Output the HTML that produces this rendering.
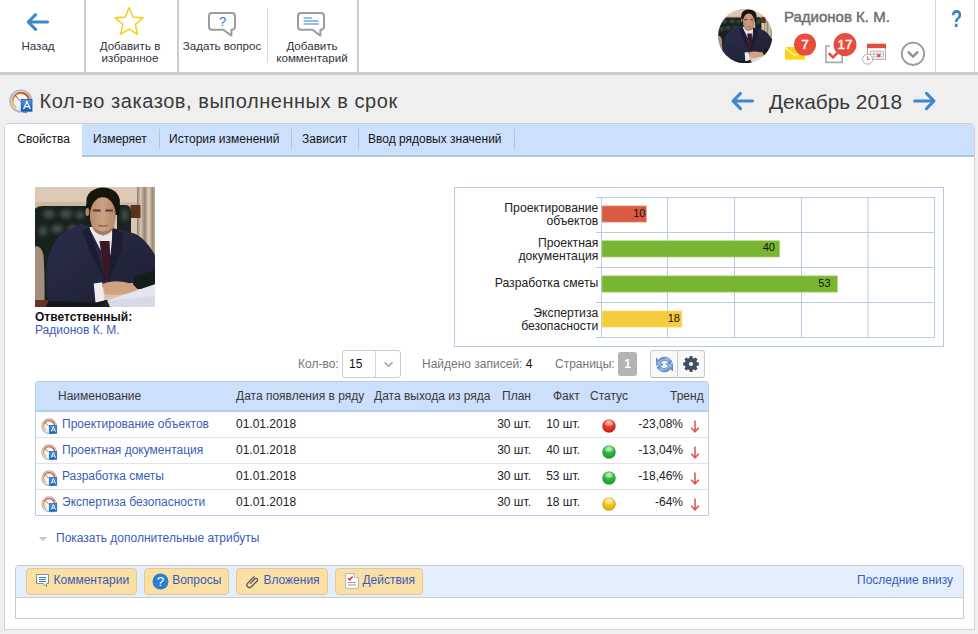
<!DOCTYPE html>
<html lang="ru">
<head>
<meta charset="utf-8">
<title>Кол-во заказов, выполненных в срок</title>
<style>
*{box-sizing:border-box;margin:0;padding:0}
html,body{width:978px;height:634px;overflow:hidden}
body{background:#efefef;font-family:"Liberation Sans",Arial,sans-serif;font-size:12px;color:#222;position:relative}
.abs{position:absolute}
a{color:#3a5db8;text-decoration:none}
/* top bar */
#top{position:absolute;left:0;top:0;width:978px;height:75px;background:#fff;border-bottom:3px solid #c9cdd3}
.vsep{position:absolute;top:0;width:2px;height:72px;background:#c9cdd3}
.tbtn{position:absolute;top:40px;text-align:center;font-size:11.6px;line-height:12px;color:#33333f;white-space:nowrap}
/* title */
#title{position:absolute;left:39.5px;top:87.5px;font-size:20px;letter-spacing:.55px;line-height:26px;color:#3a3a3a;white-space:nowrap}
#period{position:absolute;left:769px;top:89px;font-size:20.8px;line-height:26px;color:#3a3a3a;white-space:nowrap}
/* panel */
#panel{position:absolute;left:4px;top:123px;width:971px;height:507px;background:#fff;border:1px solid #d2d4d8;border-top-color:#c6ccd6;border-radius:5px 5px 0 0}
#tabs{position:absolute;left:0;top:0;width:969px;height:33px;background:#cce0fc;border-bottom:2px solid #b0c6e0;border-radius:4px 4px 0 0}
.tab{position:absolute;top:0;height:31px;line-height:31px;font-size:12px;color:#151515;white-space:nowrap}
.tsep{position:absolute;top:5px;width:1px;height:20px;background:#b4c4d8}
/* table */
#grid{position:absolute;left:35px;top:381px;width:674px;height:135px;border:1px solid #b9cde8;border-radius:3px 3px 0 0;background:#fff}
#ghead{position:absolute;left:0;top:0;width:672px;height:29.5px;background:#cce0fc;border-bottom:2px solid #b5cbe8}
.th{position:absolute;top:0;line-height:29px;color:#3a3a3a;white-space:nowrap}
.row{position:absolute;left:0;width:672px;height:26px;border-top:1px solid #e1e4e9}
.row span,.row a{position:absolute;top:0;line-height:24px;white-space:nowrap}
.r{text-align:right}
/* comments */
#cbox{position:absolute;left:15px;top:565px;width:949px;height:54px;border:1px solid #c8c8c8;background:#fff;border-radius:4px 4px 0 0}
#chead{position:absolute;left:0;top:0;width:947px;height:32px;background:#e4effe;border-bottom:1px solid #cbcdd0;border-radius:3px 3px 0 0}
.obtn{position:absolute;top:2px;height:27px;background:#fbe0a6;border:1px solid #ecc591;border-radius:4px;color:#3759bb;line-height:23.4px;white-space:nowrap}
</style>
</head>
<body>
<svg width="0" height="0" style="position:absolute">
<defs>
<linearGradient id="garc" x1="0" y1="1" x2="1" y2="0"><stop offset="0" stop-color="#f8d27a"/><stop offset=".35" stop-color="#f28a1c"/><stop offset=".7" stop-color="#ee5a14"/><stop offset="1" stop-color="#e8401c"/></linearGradient>
<radialGradient id="gface" cx=".5" cy=".4" r=".6"><stop offset="0" stop-color="#ffffff"/><stop offset="1" stop-color="#dfe6f0"/></radialGradient>
<linearGradient id="gblue" x1="0" y1="0" x2="0" y2="1"><stop offset="0" stop-color="#4a98e0"/><stop offset="1" stop-color="#1a5cb4"/></linearGradient>
<symbol id="kpi" viewBox="0 0 24 24">
<circle cx="11.8" cy="12" r="10.7" fill="url(#gface)" stroke="#aab5c8" stroke-width="1.6"/>
<path d="M6.9 18.6 A8.2 8.2 0 1 1 19.9 10.6" fill="none" stroke="url(#garc)" stroke-width="2.1"/>
<path d="M11.6 12.4 L6.2 6.4" stroke="#555" stroke-width="1" fill="none"/>
<rect x="12.2" y="10.6" width="10.8" height="11.6" fill="url(#gblue)" stroke="#1c58a8" stroke-width=".8"/>
<rect x="14.2" y="22.2" width="4" height="1.6" fill="#2c7cd8"/>
<path d="M14.6 20 L17.9 12.6 L21.2 20 M15.8 17.6 H20" fill="none" stroke="#fff" stroke-width="1.3"/>
</symbol>
<radialGradient id="bred" cx=".5" cy=".25" r=".8"><stop offset="0" stop-color="#ffb0a0"/><stop offset=".35" stop-color="#f04030"/><stop offset="1" stop-color="#c81808"/></radialGradient>
<radialGradient id="bgreen" cx=".5" cy=".25" r=".8"><stop offset="0" stop-color="#a8eab0"/><stop offset=".35" stop-color="#34bc44"/><stop offset="1" stop-color="#149a24"/></radialGradient>
<radialGradient id="byel" cx=".5" cy=".25" r=".8"><stop offset="0" stop-color="#fff0a8"/><stop offset=".35" stop-color="#f8cc20"/><stop offset="1" stop-color="#d8a000"/></radialGradient>
<symbol id="dn" viewBox="0 0 10 14"><path d="M5 1.5 V12.6 M1.2 8.8 L5 12.8 L8.8 8.8" fill="none" stroke="#d9534a" stroke-width="1.5"/></symbol>
<filter id="bl" x="-5%" y="-5%" width="110%" height="110%"><feGaussianBlur stdDeviation="0.7"/></filter>
<filter id="bl2" x="-20%" y="-20%" width="140%" height="140%"><feGaussianBlur stdDeviation="2"/></filter>
<clipPath id="pc"><rect width="120" height="120"/></clipPath>
<clipPath id="av"><circle cx="60" cy="60" r="60"/></clipPath>
<linearGradient id="cur" x1="0" x2="1" y1="0" y2="0"><stop offset="0" stop-color="#8a7866"/><stop offset=".18" stop-color="#d6c8b4"/><stop offset=".38" stop-color="#98846e"/><stop offset=".58" stop-color="#dccfbc"/><stop offset=".78" stop-color="#a08c76"/><stop offset="1" stop-color="#d2c4b0"/></linearGradient>
<linearGradient id="suit" x1="0" x2="1" y1="0" y2="1"><stop offset="0" stop-color="#2c2e49"/><stop offset="1" stop-color="#1d1f33"/></linearGradient>
<linearGradient id="face" x1="0" x2="1" y1="0" y2="0"><stop offset="0" stop-color="#b88a6a"/><stop offset=".5" stop-color="#cda284"/><stop offset="1" stop-color="#b48868"/></linearGradient>
<g id="man">
<rect width="120" height="120" fill="#d9c6b0"/>
<g filter="url(#bl)">
<rect x="-2" y="-2" width="124" height="21" fill="#dccab6"/>
<rect x="-2" y="15" width="124" height="5" fill="#cdb8a2"/>
<rect x="102" y="-2" width="20" height="80" fill="url(#cur)"/>
<rect x="95.5" y="18" width="10" height="13" fill="#5c301c"/>
<path d="M-2 28 Q-2 19 8 19 H52 Q58 19 58 28 V118 H-2 Z" fill="#18211f"/>
<path d="M82 18 H91 Q96 18 96 26 V62 H82 Z" fill="#1a2422"/>
<g filter="url(#bl2)" fill="#56645e" opacity=".75"><ellipse cx="14" cy="27" rx="6" ry="4"/><ellipse cx="31" cy="27" rx="6" ry="4"/><ellipse cx="45" cy="28" rx="4" ry="4"/><ellipse cx="22" cy="42" rx="6" ry="4"/><ellipse cx="38" cy="42" rx="5" ry="4"/><ellipse cx="8" cy="44" rx="4" ry="5"/><ellipse cx="90" cy="28" rx="3" ry="6"/></g>
<path d="M-2 60 Q6 57 8.5 68 Q10 90 9.5 113 H-2 Z" fill="#a68e7c"/>
<path d="M98 86 L122 80 V102 H98 Z" fill="#141c1a"/>
<rect x="-2" y="113" width="80" height="9" fill="#17181a"/><path d="M-2 113 H14 L10 122 H-2 Z" fill="#6a3220"/>
<path d="M46 37 Q32 43 24.5 49 Q15 58 12 78 Q10.5 100 13 114 L60 115.5 L62 101 L98 96 L99 89 L122 83 V72 Q114 56 104 49 Q96 44 79 41.5 L54 40 Z" fill="url(#suit)"/>
<path d="M54 40.5 L66 37 L77 41 L77.6 58 L75 70 L72 96 L66 64 Z" fill="#ebe7ea"/>
<path d="M64.5 54 H74.6 L75.8 90 L72.4 97 L69 88 Z" fill="#3a1828"/>
<path d="M47 44 L54 40 L71 96 L56 66 Z" fill="#1b1d31"/>
<path d="M88 47 L78 41 L73 96 L86 64 Z" fill="#1b1d31"/>
<ellipse cx="68" cy="13.5" rx="16.6" ry="13" fill="#19130f"/>
<path d="M51.4 16 Q50 22 52 30 L56 30 V14 Z M84.4 12 Q86 20 84 28 L80 28 V12 Z" fill="#19130f"/>
<ellipse cx="67.8" cy="28.6" rx="12.9" ry="18.4" fill="url(#face)"/>
<ellipse cx="52.4" cy="25" rx="1.9" ry="4" fill="#b88868"/>
<path d="M56 17 Q58 9.5 68 9 Q78 9 80.5 16 Q81 8 68 6 Q55 7 56 17 Z" fill="#19130f"/>
<path d="M58 23.6 H65.6 M70.4 23.6 H78" stroke="#5a3c2e" stroke-width="2" fill="none"/>
<path d="M63.4 38.4 Q68 39.8 72.6 38.4" stroke="#8a5648" stroke-width="1.3" fill="none"/>
<path d="M56 36 Q58 47 68 48.4 Q78 47 80 36 Q77 44 68 44.6 Q59 44 56 36 Z" fill="#a07c62"/>
<path d="M58.7 96.5 L67.2 95.2 L69.5 113.6 L60.5 115.6 Z" fill="#eeeaee"/>
<path d="M67.2 97 Q80 91.5 98 97.5 L104 103.5 Q92 109 70 107.6 Z" fill="#d0a282"/>
<path d="M72 113.6 L122 96.5 V122 H76 Z" fill="#e4e5ee"/>
<path d="M72 114 L122 108.6 V122 H74 Z" fill="#d6d9e6"/>
<path d="M72 113.6 L76 122 H60 Z" fill="#1c2024"/>
</g>
</g></defs></svg>
<div id="top">
  <div class="vsep" style="left:84px"></div>
  <div class="vsep" style="left:177px"></div>
  <div class="vsep" style="left:357px"></div>
  <div class="abs" style="left:267px;top:8px;width:1px;height:55px;background:#d5d8de"></div>
  <div class="abs" style="left:935px;top:0;width:1px;height:72px;background:#d2d6de"></div>
  <div class="abs" style="left:974px;top:0;width:1px;height:72px;background:#d2d6de"></div>

  <svg class="abs" style="left:24px;top:9.5px" width="28" height="24" viewBox="0 0 28 24"><path d="M11.6 4.6 L4.2 12 L11.6 19.4 M4.6 12 H23.6" fill="none" stroke="#3d88c9" stroke-width="3" stroke-linecap="round" stroke-linejoin="round"/></svg>
  <div class="tbtn" style="left:0;width:76px">Назад</div>

  <svg class="abs" style="left:112.3px;top:3.7px" width="34.2" height="34.2" viewBox="0 0 32 32"><path d="M16 3.5 L19.6 12.2 L29 13 L21.9 19.2 L24 28.4 L16 23.5 L8 28.4 L10.1 19.2 L3 13 L12.4 12.2 Z" fill="none" stroke="#f7cf1d" stroke-width="1.45" stroke-linejoin="round"/></svg>
  <div class="tbtn" style="left:86px;width:88px">Добавить в<br>избранное</div>

  <svg class="abs" style="left:206.8px;top:9.6px" width="32" height="28" viewBox="0 0 32 28"><path d="M5 3 H25 a3 3 0 0 1 3 3 V16.7 a3 3 0 0 1 -3 3 H24.4 V25.6 L16.4 19.7 H5 a3 3 0 0 1 -3 -3 V6 a3 3 0 0 1 3 -3 Z" fill="#fff" stroke="#9c9c9c" stroke-width="2" stroke-linejoin="round"/><text x="15.6" y="16" font-family="Liberation Sans,sans-serif" font-size="13" fill="#2f74c0" text-anchor="middle">?</text></svg>
  <div class="tbtn" style="left:179px;width:86px">Задать вопрос</div>

  <svg class="abs" style="left:296.3px;top:9.6px" width="32" height="28" viewBox="0 0 32 28"><path d="M5 3 H25 a3 3 0 0 1 3 3 V16.7 a3 3 0 0 1 -3 3 H24.4 V25.6 L16.4 19.7 H5 a3 3 0 0 1 -3 -3 V6 a3 3 0 0 1 3 -3 Z" fill="#fff" stroke="#9c9c9c" stroke-width="2" stroke-linejoin="round"/><path d="M7.6 8 H16 M7.6 11 H22.6 M7.6 14 H22.6" stroke="#2f7fd4" stroke-width="1.2" fill="none"/></svg>
  <div class="tbtn" style="left:268px;width:88px">Добавить<br>комментарий</div>

  <div class="abs" style="left:784px;top:8px;font-size:15px;font-weight:normal;color:#6e6e6e;-webkit-text-stroke:.45px #6e6e6e;line-height:18px;white-space:nowrap">Радионов К. М.</div>
  <svg class="abs" style="left:780px;top:30px" width="150" height="42" viewBox="780 30 150 42" font-family="Liberation Sans,Arial,sans-serif">
    <path d="M785 47 H805 V59.6 H785 Z" fill="#fcd116"/><path d="M785 47.6 L795.2 55.8 L805 47.6" fill="none" stroke="#fff2a8" stroke-width="1.5"/>
    <circle cx="805" cy="44.6" r="11" fill="#e84c3d"/><text x="805" y="49.2" font-size="13.5" fill="#fff" stroke="#fff" stroke-width=".4" text-anchor="middle">7</text>
    <path d="M830 46 H826 V62.4 H842.2 V46 H838" fill="none" stroke="#a9a9a9" stroke-width="1.6"/><path d="M828.8 53.2 L833 57.4 L838 52.4" fill="none" stroke="#e84c3d" stroke-width="2.5"/>
    <circle cx="845" cy="44.6" r="11.5" fill="#e84c3d"/><text x="845" y="49.2" font-size="13.5" fill="#fff" stroke="#fff" stroke-width=".4" text-anchor="middle">17</text>
    <rect x="867.5" y="44.3" width="18" height="15" fill="#fff" stroke="#a9a9a9" stroke-width="1"/><rect x="867" y="43.8" width="19" height="4.4" fill="#e84c3d"/>
    <path d="M870.5 51 H883.5 M870.5 54 H883.5 M870.5 57 H883.5 M870.5 51 V57 M873.8 51 V57 M877 51 V57 M880.2 51 V57 M883.5 51 V57" stroke="#b0b0b0" stroke-width=".8" fill="none"/><rect x="877.2" y="54.2" width="3" height="2.8" fill="#e84c3d"/>
    <circle cx="867.6" cy="59.2" r="5" fill="#fff" stroke="#b0b0b0" stroke-width="1"/><path d="M867.6 56.4 V59.4 H869.8" fill="none" stroke="#e84c3d" stroke-width="1"/>
    <circle cx="913" cy="53.8" r="11.2" fill="#fff" stroke="#9a9a9a" stroke-width="1.8"/><path d="M908 51.6 L913 56.6 L918 51.6" fill="none" stroke="#8e8e8e" stroke-width="2.3"/>
  </svg>
  <div class="abs" style="left:950.5px;top:4.5px;font-size:24px;font-weight:bold;color:#3f7cc4;line-height:28px;transform:scaleX(.76);transform-origin:0 0">?</div>
</div>

<svg class="abs" style="left:9px;top:89px" width="24" height="24"><use href="#kpi"/></svg>
<svg class="abs" style="left:730px;top:90px" width="26" height="22" viewBox="0 0 26 22"><path d="M10.5 3.4 L3 11 L10.5 18.6 M3.4 11 H22.6" fill="none" stroke="#3d88c9" stroke-width="3" stroke-linecap="round" stroke-linejoin="round"/></svg>
<svg class="abs" style="left:911px;top:90px" width="26" height="22" viewBox="0 0 26 22"><path d="M15.5 3.4 L23 11 L15.5 18.6 M22.6 11 H3.6" fill="none" stroke="#3d88c9" stroke-width="3" stroke-linecap="round" stroke-linejoin="round"/></svg>

<div id="title">Кол-во заказов, выполненных в срок</div>
<div id="period">Декабрь 2018</div>

<div id="panel">
  <div id="tabs">
    <div class="abs" style="left:0;top:0;width:77px;height:33px;background:#fff;border-radius:4px 0 0 0"></div>
    <div class="tab" style="left:12.3px">Свойства</div>
    <div class="tab" style="left:88px">Измеряет</div>
    <div class="tsep" style="left:154px"></div>
    <div class="tab" style="left:164px">История изменений</div>
    <div class="tsep" style="left:286px"></div>
    <div class="tab" style="left:297px">Зависит</div>
    <div class="tsep" style="left:353px"></div>
    <div class="tab" style="left:363px">Ввод рядовых значений</div>
    <div class="tsep" style="left:509px"></div>
  </div>
</div>

<svg class="abs" style="left:35px;top:187px" width="120" height="120" viewBox="0 0 120 120"><g clip-path="url(#pc)"><use href="#man"/></g></svg>
<svg class="abs" style="left:717.8px;top:8.6px" width="54.4" height="54.2" viewBox="0 0 120 120"><g clip-path="url(#av)"><use href="#man"/></g></svg>
<svg class="abs" style="left:454px;top:187px" width="490" height="160" viewBox="454 187 490 160" font-family="Liberation Sans,Arial,sans-serif">
<rect x="454.5" y="187.5" width="489" height="159" fill="#fff" stroke="#b7c8e6"/>
<path d="M601.5 197 V338 M667.5 197 V338 M734.5 197 V338 M801.5 197 V338 M868 197 V338 M934.5 197 V338 M596 197.5 H935 M596 232.5 H935 M596 267.5 H935 M596 302.5 H935 M596 337.5 H935 " stroke="#bbcbe5" stroke-width="1" fill="none"/>
<rect x="602" y="205.9" width="44.4" height="16.2" fill="#d95b43" stroke="#e9a090" stroke-width=".7"/>
<text x="639.3" y="216.5" font-size="11" text-anchor="middle" fill="#111">10</text>
<rect x="602" y="240.8" width="177.6" height="16.2" fill="#7ab531" stroke="#a8d070" stroke-width=".7"/>
<text x="768.8" y="251.4" font-size="11" text-anchor="middle" fill="#111">40</text>
<rect x="602" y="275.9" width="235.3" height="16.2" fill="#7ab531" stroke="#a8d070" stroke-width=".7"/>
<text x="824.4" y="286.5" font-size="11" text-anchor="middle" fill="#111">53</text>
<rect x="602" y="310.9" width="79.9" height="16.2" fill="#f6cc3c" stroke="#f9e08c" stroke-width=".7"/>
<text x="673.8" y="321.5" font-size="11" text-anchor="middle" fill="#111">18</text>
<text x="598.3" y="211.5" font-size="12.2" text-anchor="end" fill="#222">Проектирование</text>
<text x="598.3" y="224.9" font-size="12.2" text-anchor="end" fill="#222">объектов</text>
<text x="598.3" y="246.5" font-size="12.2" text-anchor="end" fill="#222">Проектная</text>
<text x="598.3" y="259.9" font-size="12.2" text-anchor="end" fill="#222">документация</text>
<text x="598.3" y="287.3" font-size="12.2" text-anchor="end" fill="#222">Разработка сметы</text>
<text x="598.3" y="316.5" font-size="12.2" text-anchor="end" fill="#222">Экспертиза</text>
<text x="598.3" y="329.9" font-size="12.2" text-anchor="end" fill="#222">безопасности</text>
</svg>
<div class="abs" style="left:35px;top:311px;font-weight:bold;color:#111;line-height:13px">Ответственный:</div>
<a class="abs" style="left:35px;top:324px;line-height:13px">Радионов К. М.</a>

<div class="abs" style="left:298px;top:357px;color:#777;line-height:14px">Кол-во:</div>
<div class="abs" style="left:342px;top:350px;width:59px;height:28px;border:1px solid #ccc;border-radius:3px;background:#fff"><span class="abs" style="left:6px;top:6px;line-height:14px;color:#111">15</span><span class="abs" style="left:32px;top:0;width:1px;height:26px;background:#d5d5d5"></span><svg class="abs" style="left:40px;top:10px" width="12" height="8" viewBox="0 0 12 8"><path d="M1.7 1.4 L5.6 5.3 L9.5 1.4" fill="none" stroke="#a4a4a4" stroke-width="1.5"/></svg></div>
<div class="abs" style="left:422px;top:357px;color:#777;line-height:14px;white-space:nowrap">Найдено записей: <span style="color:#111">4</span></div>
<div class="abs" style="left:555px;top:357px;color:#777;line-height:14px">Страницы:</div>
<div class="abs" style="left:618px;top:352px;width:19px;height:24px;border-radius:3px;background:#b4b4b4;color:#fff;font-weight:bold;text-align:center;line-height:24px">1</div>
<div class="abs" style="left:650px;top:350px;width:28px;height:28px;border:1px solid #ccc;border-radius:3px 0 0 3px;background:#f8f8f8;border-bottom-color:#b8b8b8"><svg class="abs" style="left:4.6px;top:4.7px" width="17" height="17" viewBox="0 0 16 16"><defs><linearGradient id="rf" x1="0" y1="0" x2="1" y2="1"><stop offset="0" stop-color="#3468b0"/><stop offset=".5" stop-color="#9cc2ee"/><stop offset="1" stop-color="#2c5ca4"/></linearGradient></defs><path d="M.3 2 V8.6 H6.8 L4.5 6.3 A4.4 4.4 0 0 1 12.2 6.8 L15 5.4 A7.6 7.6 0 0 0 2.2 3.9 Z" fill="url(#rf)" stroke="#2f5fa8" stroke-width=".5"/><path d="M15.7 14 V7.2 H9.2 L11.5 9.6 A4.4 4.4 0 0 1 3.8 9.4 L1 10.6 A7.6 7.6 0 0 0 13.8 12.1 Z" fill="url(#rf)" stroke="#2f5fa8" stroke-width=".5"/></svg></div>
<div class="abs" style="left:677px;top:350px;width:28px;height:28px;border:1px solid #ccc;border-radius:0 3px 3px 0;background:#f8f8f8;border-bottom-color:#b8b8b8"><svg class="abs" style="left:5px;top:5.4px" width="16" height="16" viewBox="0 0 16 16"><path d="M13.81 6.51 L15.70 6.78 L15.70 9.22 L13.81 9.49 L13.16 11.05 L14.31 12.58 L12.58 14.31 L11.05 13.16 L9.49 13.81 L9.22 15.70 L6.78 15.70 L6.51 13.81 L4.95 13.16 L3.42 14.31 L1.69 12.58 L2.84 11.05 L2.19 9.49 L0.30 9.22 L0.30 6.78 L2.19 6.51 L2.84 4.95 L1.69 3.42 L3.42 1.69 L4.95 2.84 L6.51 2.19 L6.78 0.30 L9.22 0.30 L9.49 2.19 L11.05 2.84 L12.58 1.69 L14.31 3.42 L13.16 4.95 Z M8 5.7 A2.3 2.3 0 1 0 8 10.3 A2.3 2.3 0 1 0 8 5.7 Z" fill="#3e4e60" fill-rule="evenodd" stroke="#3e4e60" stroke-width=".5" stroke-linejoin="round"/></svg></div>

<div id="grid">
  <div id="ghead">
    <div class="th" style="left:22px">Наименование</div>
    <div class="th" style="left:200px">Дата появления в ряду</div>
    <div class="th" style="left:338px">Дата выхода из ряда</div>
    <div class="th" style="left:466px">План</div>
    <div class="th" style="left:517px">Факт</div>
    <div class="th" style="left:554px">Статус</div>
    <div class="th" style="left:634px">Тренд</div>
  </div>
  <div class="row" style="top:29px;border-top-color:transparent;">
    <svg class="abs" style="left:5px;top:6.3px" width="16.5" height="16.5"><use href="#kpi"/></svg>
    <a style="left:26px">Проектирование объектов</a>
    <span style="left:200px">01.01.2018</span>
    <span class="r" style="left:440px;width:55px">30 шт.</span>
    <span class="r" style="left:489px;width:55px">10 шт.</span>
    <svg class="abs" style="left:566px;top:6.8px" width="14" height="14" viewBox="0 0 14 14"><circle cx="7" cy="7" r="6.6" fill="url(#bred)" stroke="rgba(0,0,0,.18)" stroke-width=".6"/><ellipse cx="7" cy="4.2" rx="4.2" ry="2.6" fill="#fff" opacity=".35"/></svg>
    <span class="r" style="left:587px;width:60px">-23,08%</span>
    <svg class="abs" style="left:654px;top:7px" width="10" height="14"><use href="#dn"/></svg>
  </div>
  <div class="row" style="top:55px;">
    <svg class="abs" style="left:5px;top:6.3px" width="16.5" height="16.5"><use href="#kpi"/></svg>
    <a style="left:26px">Проектная документация</a>
    <span style="left:200px">01.01.2018</span>
    <span class="r" style="left:440px;width:55px">30 шт.</span>
    <span class="r" style="left:489px;width:55px">40 шт.</span>
    <svg class="abs" style="left:566px;top:6.8px" width="14" height="14" viewBox="0 0 14 14"><circle cx="7" cy="7" r="6.6" fill="url(#bgreen)" stroke="rgba(0,0,0,.18)" stroke-width=".6"/><ellipse cx="7" cy="4.2" rx="4.2" ry="2.6" fill="#fff" opacity=".35"/></svg>
    <span class="r" style="left:587px;width:60px">-13,04%</span>
    <svg class="abs" style="left:654px;top:7px" width="10" height="14"><use href="#dn"/></svg>
  </div>
  <div class="row" style="top:81px;">
    <svg class="abs" style="left:5px;top:6.3px" width="16.5" height="16.5"><use href="#kpi"/></svg>
    <a style="left:26px">Разработка сметы</a>
    <span style="left:200px">01.01.2018</span>
    <span class="r" style="left:440px;width:55px">30 шт.</span>
    <span class="r" style="left:489px;width:55px">53 шт.</span>
    <svg class="abs" style="left:566px;top:6.8px" width="14" height="14" viewBox="0 0 14 14"><circle cx="7" cy="7" r="6.6" fill="url(#bgreen)" stroke="rgba(0,0,0,.18)" stroke-width=".6"/><ellipse cx="7" cy="4.2" rx="4.2" ry="2.6" fill="#fff" opacity=".35"/></svg>
    <span class="r" style="left:587px;width:60px">-18,46%</span>
    <svg class="abs" style="left:654px;top:7px" width="10" height="14"><use href="#dn"/></svg>
  </div>
  <div class="row" style="top:107px;">
    <svg class="abs" style="left:5px;top:6.3px" width="16.5" height="16.5"><use href="#kpi"/></svg>
    <a style="left:26px">Экспертиза безопасности</a>
    <span style="left:200px">01.01.2018</span>
    <span class="r" style="left:440px;width:55px">30 шт.</span>
    <span class="r" style="left:489px;width:55px">18 шт.</span>
    <svg class="abs" style="left:566px;top:6.8px" width="14" height="14" viewBox="0 0 14 14"><circle cx="7" cy="7" r="6.6" fill="url(#byel)" stroke="rgba(0,0,0,.18)" stroke-width=".6"/><ellipse cx="7" cy="4.2" rx="4.2" ry="2.6" fill="#fff" opacity=".35"/></svg>
    <span class="r" style="left:587px;width:60px">-64%</span>
    <svg class="abs" style="left:654px;top:7px" width="10" height="14"><use href="#dn"/></svg>
  </div>

</div>

<svg class="abs" style="left:39px;top:536.7px" width="8" height="5" viewBox="0 0 8 5"><path d="M0 0 H8 L4 4.5 Z" fill="#c8c8c8"/></svg>
<a class="abs" style="left:56px;top:531px;line-height:14px;white-space:nowrap">Показать дополнительные атрибуты</a>

<div id="cbox">
  <div id="chead">
    <div class="obtn" style="left:10px;width:111px"><svg class="abs" style="left:8px;top:4.4px" width="15" height="15" viewBox="0 0 15 15"><path d="M1.5 1.5 H13.5 V10.5 H11.5 V13.6 L8.2 10.5 H1.5 Z" fill="#fff" stroke="#8c8c8c" stroke-width="1"/><path d="M4 4 H11 M4 6 H11 M4 8 H11" stroke="#2f7fc8" stroke-width="1" fill="none" shape-rendering="crispEdges"/></svg><span class="abs" style="left:26.5px">Комментарии</span></div>
    <div class="obtn" style="left:128px;width:85px"><svg class="abs" style="left:6.6px;top:3.8px" width="17" height="17" viewBox="0 0 17 17"><circle cx="8.5" cy="8.5" r="8" fill="#2b7fd0"/><text x="8.5" y="13" font-family="Liberation Sans,Arial,sans-serif" font-size="13.5" fill="#fff" text-anchor="middle">?</text></svg><span class="abs" style="left:27.2px">Вопросы</span></div>
    <div class="obtn" style="left:220px;width:92px"><svg class="abs" style="left:8px;top:5px" width="16" height="16" viewBox="0 0 16 16"><path d="M5.2 9.6 L10 4.8 a1.5 1.5 0 0 1 2.2 2.2 L6.4 12.8 a2.6 2.6 0 0 1 -3.7 -3.7 L8.6 3.2 a1 1 0 0 1 .5 -.2" fill="none" stroke="#555" stroke-width="1.3" stroke-linecap="round"/></svg><span class="abs" style="left:26.4px">Вложения</span></div>
    <div class="obtn" style="left:319px;width:88px"><svg class="abs" style="left:9px;top:4px" width="14" height="16" viewBox="0 0 14 16"><path d="M.6 .6 H9.4 L13.4 4.6 V15.4 H.6 Z" fill="#fff" stroke="#b4b4b4" stroke-width="1"/><path d="M9.4 .6 V4.6 H13.4" fill="#eee" stroke="#b4b4b4" stroke-width="1"/><path d="M3 5 L4.8 6.8 L7.6 3.6" fill="none" stroke="#e03a2c" stroke-width="1.5"/><path d="M3 9.5 H11 M3 12 H11" stroke="#999" stroke-width="1" fill="none"/></svg><span class="abs" style="left:26.4px">Действия</span></div>
    <a class="abs" style="left:841px;top:7px;line-height:14px;white-space:nowrap">Последние внизу</a>
  </div>
</div>
</body>
</html>
